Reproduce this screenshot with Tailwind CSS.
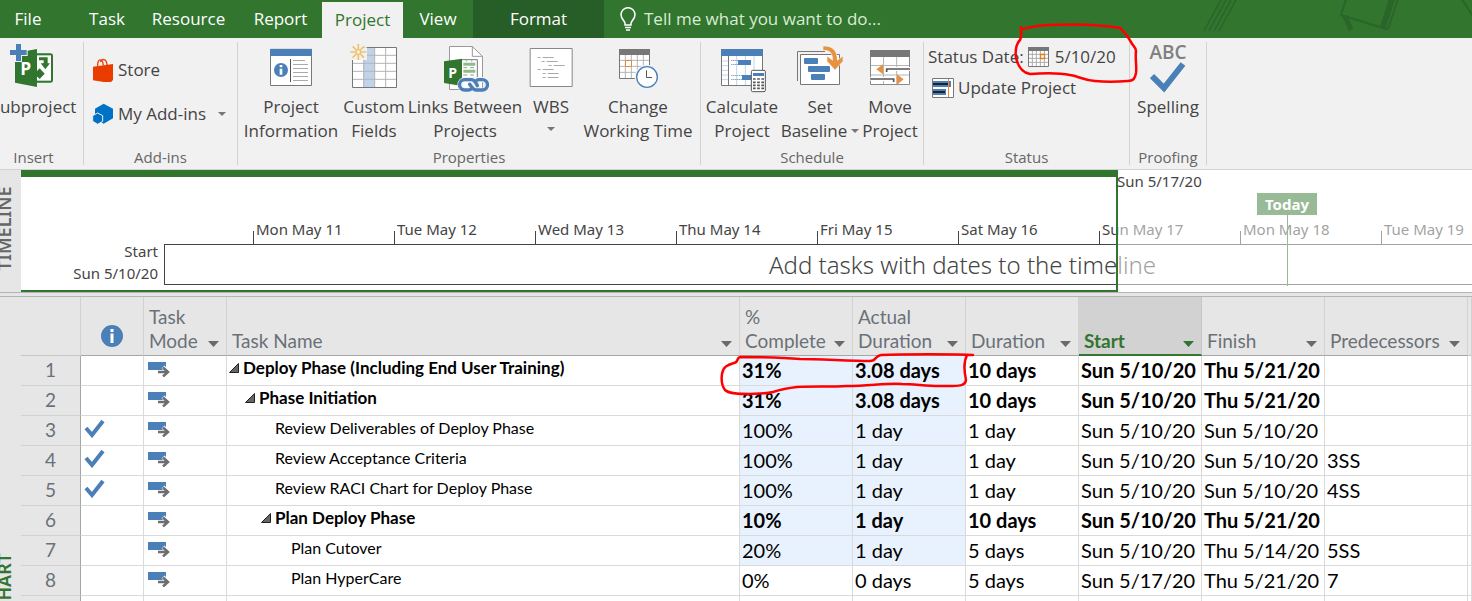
<!DOCTYPE html>
<html lang="en">
<head>
  <meta charset="UTF-8">
  <meta name="viewport" content="width=device-width, initial-scale=1.0">
  <title>Project</title>
  <script src="https://cdn.jsdelivr.net/npm/@tailwindcss/browser@4"></script>
</head>
<body class="relative flex flex-col h-screen overflow-hidden bg-[#e6e6e6] font-['Open_Sans','Noto_Sans',sans-serif] text-[#444444]">

  <!-- Tabs -->
  <nav class="relative flex shrink-0 h-[38px] bg-[#31752f] text-white text-[17px] leading-[38px] whitespace-nowrap">
    <svg class="absolute right-0 top-0 w-[292px] h-[38px]" viewBox="0 0 292 38" fill="none" stroke="#2a6529">
      <path d="M42-2L24 31M47-2L29 31M52-2L34 31M57-2L39 31" stroke-width="1.5"/>
      <path d="M166-1L161 15L206 29Q208 29 209 26L218-1" stroke-width="2"/>
      <path d="M212-1L203 27" stroke-width="6"/>
      <path d="M165 16L171 30" stroke-width="5"/>
      <path d="M281-2L293 16" stroke-width="2"/>
    </svg>
    <button class="w-14 mr-5">File</button>
    <button class="w-[62px]">Task</button>
    <button class="w-[101px]">Resource</button>
    <button class="w-[83px]">Report</button>
    <button class="w-[81px] mt-[2px] h-9 leading-9 bg-[#f1f1f1] text-[#31752f]">Project</button>
    <button class="w-[70px]">View</button>
    <button class="w-[131px] bg-[#275d26]">Format</button>
    <label class="relative flex items-center gap-2 pl-4">
      <svg class="w-4 h-6" viewBox="0 0 16 24" fill="none" stroke="#fff" stroke-width="1.5">
        <path d="M5 18V16.5C5 14 1 12 1 7.700A7 7 0 0 1 15 7.700C15 12 11 14 11 16.500V18Z"/>
        <path d="M5 20.500H11M6 23H10"/>
      </svg>
      <input type="text" aria-label="Tell me what you want to do" placeholder="Tell me what you want to do..." class="w-[280px] bg-transparent outline-none placeholder:text-[#d9ecd4]">
    </label>
  </nav>

  <!-- Ribbon -->
  <div class="flex shrink-0 h-[132px] pt-1 bg-[#f1f1f1] border-b border-[#d2d2d2] text-[17px] leading-6 whitespace-nowrap">

    <section class="flex flex-col items-center w-[84px] h-[123px] pr-4 border-r border-[#d2d2d2]">
      <button class="flex flex-col items-center">
        <svg class="w-[52px] h-[53px]" viewBox="21 126 156 159">
          <path d="M108 160H148Q156 160 156 168V240Q156 248 148 248H108Z" fill="#31752f"/>
          <path d="M108 166H150V242H108Z" fill="#fff"/>
          <path d="M114 172H140V190H147L133 208L119 190H128V181H114Z" fill="#31752f"/>
          <path d="M108 213L116 205L131 221L116 237L108 229Z" fill="#31752f"/>
          <path d="M42 159L108 147V261L42 248Z" fill="#31752f"/>
          <path d="M42 147H62V148H80V168H63V186H42Z" fill="#f1f1f1"/>
          <path d="M45 132H60V150H77V165H60V183H45V165H27V150H45Z" fill="#4a7fb8"/>
          <text x="58" y="225" font-size="52" font-weight="700" fill="#fff">P</text>
        </svg>
        Subproject
      </button>
      <span class="mt-auto text-[15px] leading-4 text-[#666666]">Insert</span>
    </section>

    <section class="flex flex-col w-[154px] h-[123px] pl-2 border-r border-[#d2d2d2]">
      <button class="flex items-center gap-1 mt-4">
        <svg class="w-[22px] h-6" viewBox="276 168 66 72">
          <path d="M279 194L339 186V234L330 243L279 235Z" fill="#eb3c00"/>
          <path d="M293 193C292 168 308 168 310 190M301 180C306 168 320 170 321 189" fill="none" stroke="#eb3c00" stroke-width="4"/>
        </svg>
        Store
      </button>
      <button class="flex items-center gap-1 mt-5">
        <svg class="w-[22px] h-6" viewBox="276 304 66 72">
          <path d="M311 309L339 324V353L311 369L285 353V324Z" fill="#0072c6"/>
          <path d="M293 337L308 345V362L293 371L278 362V345Z" fill="#0072c6" stroke="#f1f1f1" stroke-width="3"/>
        </svg>
        My Add-ins
        <svg class="w-2 h-1 ml-2" viewBox="0 0 8 4"><path d="M0 0H8L4 4Z" fill="#777"/></svg>
      </button>
      <span class="mt-auto pr-2 text-center text-[15px] leading-4 text-[#666666]">Add-ins</span>
    </section>

    <section class="flex flex-col w-[463px] h-[123px] border-r border-[#d2d2d2]">
      <div class="flex items-start pl-1">
        <button class="flex flex-col items-center w-[98px]">
          <svg class="w-[48px] h-[53px]" viewBox="801 126 144 159">
            <path d="M811.500 148H934.500V256.500H811.500Z" fill="#fff" stroke="#777" stroke-width="3"/>
            <path d="M810 147H936V168H810Z" fill="#4a7fb8"/>
            <circle cx="843" cy="210" r="21" fill="#4a7fb8"/>
            <path d="M839 206H847V224H839ZM839 195H847V202H839Z" fill="#fff"/>
            <path d="M871.500 177V246" stroke="#555" stroke-width="3"/>
            <path d="M879 181.500H915M879 193.500H924M879 205.500H924M879 217.500H924M879 229.500H924M879 241.500H924" stroke="#aaa" stroke-width="3"/>
          </svg>
          Project<br>Information
        </button>
        <button class="flex flex-col items-center w-[68px]">
          <svg class="w-[48px] h-[53px]" viewBox="1050 126 144 159">
            <path d="M1057.500 142.500H1189.500V262.500H1057.500Z" fill="#fff"/>
            <path d="M1091 142H1124V262H1091Z" fill="#c0d3e9"/>
            <path d="M1058 166H1190M1058 190H1190M1058 214H1190M1058 238H1190M1091 142V262M1124 142V262M1157 142V262" stroke="#b5b5b5" stroke-width="3"/>
            <path d="M1057.500 142.500H1189.500V262.500H1057.500Z" fill="none" stroke="#777" stroke-width="3"/>
            <path d="M1048 130H1091V142H1101V180H1048Z" fill="#f1f1f1"/>
            <path d="M1075 132V148M1075 164V180M1051 156H1067M1083 156H1099M1058 139L1069 150M1081 162L1092 173M1058 173L1069 162M1081 150L1092 139" stroke="#f0c16c" stroke-width="5"/>
            <circle cx="1075" cy="156" r="7" fill="none" stroke="#f0c16c" stroke-width="4"/>
          </svg>
          Custom<br>Fields
        </button>
        <button class="flex flex-col items-center w-[114px]">
          <svg class="w-[48px] h-[53px]" viewBox="123 126 144 159">
            <path d="M148.500 139.500H217L247.500 169V268.500H148.500Z" fill="#fff" stroke="#999" stroke-width="3"/>
            <path d="M217 139V169H247" fill="none" stroke="#999" stroke-width="3"/>
            <path d="M186 179H232V236" fill="none" stroke="#777" stroke-width="3"/>
            <path d="M190 193H226M190 214H226" stroke="#8cbd87" stroke-width="9"/>
            <path d="M190 203H202M210 203H222M190 225H202M210 225H222M197 183H201M213 183H217" stroke="#999" stroke-width="3"/>
            <path d="M132 184L186 176V258L132 249Z" fill="#31752f"/>
            <text x="145" y="234" font-size="42" font-weight="700" fill="#fff">P</text>
            <g fill="none" stroke="#f1f1f1" stroke-width="16"><rect x="180" y="239" width="54" height="32" rx="16"/><rect x="212" y="239" width="50" height="32" rx="16"/></g>
            <g fill="none" stroke="#4a7fb8" stroke-width="10" stroke-linecap="round">
              <path d="M214 266Q211 270 205 270H194A15 15 0 0 1 194 239H214Q221 239 227 248L232 257"/>
              <path d="M228 243Q231 239 237 239H247A15 15 0 0 1 247 270H229Q221 270 215 261L209 253"/>
            </g>
          </svg>
          Links Between<br>Projects
        </button>
        <button class="flex flex-col items-center w-[58px]">
          <svg class="w-[48px] h-[53px]" viewBox="382 126 144 159">
            <path d="M391.500 145.500H517.500V259.500H391.500Z" fill="#fff" stroke="#888" stroke-width="3"/>
            <path d="M414 172.500H423M429 172.500H462M426 184.500H435M441 184.500H474M447 196.500H456M462 196.500H495M414 208.500H423M429 208.500H462M429 220.500H438M444 220.500H477M429 232.500H438M444 232.500H477" stroke="#aaa" stroke-width="3"/>
          </svg>
          WBS
          <svg class="w-2 h-1 mt-2" viewBox="0 0 8 4"><path d="M0 0H8L4 4Z" fill="#777"/></svg>
        </button>
        <button class="flex flex-col items-center w-[116px]">
          <svg class="w-[48px] h-[53px]" viewBox="642 126 144 159">
            <path d="M658.500 160H748.500V235.500H658.500Z" fill="#fff"/>
            <path d="M676 163V235M694 163V235M712 163V235M730 163V235M658 181H748M658 199H748M658 217H748" stroke="#b5b5b5" stroke-width="3"/>
            <path d="M658.500 160H748.500V235.500H658.500Z" fill="none" stroke="#777" stroke-width="3"/>
            <path d="M657 147H750V165H657Z" fill="#777"/>
            <path d="M676.500 181.500H694.500V199.500H676.500Z" fill="#fff" stroke="#e3873b" stroke-width="3"/>
            <circle cx="741" cy="231" r="37" fill="#f1f1f1"/>
            <circle cx="741" cy="231" r="31" fill="#fff" stroke="#4a7fb8" stroke-width="4"/>
            <path d="M739.500 211V232.500H756" fill="none" stroke="#555" stroke-width="3"/>
          </svg>
          Change<br>Working Time
        </button>
      </div>
      <span class="mt-auto text-center text-[15px] leading-4 text-[#666666]">Properties</span>
    </section>

    <section class="flex flex-col w-[223px] h-[123px] border-r border-[#d2d2d2]">
      <div class="flex items-start pl-1">
        <button class="flex flex-col items-center w-[74px]">
          <svg class="w-[48px] h-[53px]" viewBox="54 126 144 159">
            <path d="M64.500 150H187.500V256.500H64.500Z" fill="#fff" stroke="#777" stroke-width="3"/>
            <path d="M66 183H84M66 197H84M66 211H84M66 225H84M66 239H84M110 168V255M136 168V255M162 168V255" stroke="#c0d3e9" stroke-width="3"/>
            <path d="M85.500 168V256" stroke="#777" stroke-width="3"/>
            <path d="M63 147H189V168H63Z" fill="#4a7fb8"/>
            <path d="M94 181.500H114M94 193.500H114M94 226.500H126M94 238.500H126" stroke="#4a7fb8" stroke-width="3" stroke-dasharray="3 3"/>
            <path d="M114 180H153V195H114ZM126 225H153V240H126Z" fill="#4a7fb8"/>
            <rect x="154" y="211" width="42" height="64" rx="4" fill="#fff" stroke="#555" stroke-width="3"/>
            <path d="M159 219H192V228H159Z" fill="#4a7fb8"/>
            <path d="M159 237H192M159 247H192M159 256H192M159 265H192" stroke="#555" stroke-width="5" stroke-dasharray="8 4.500"/>
          </svg>
          Calculate<br>Project
        </button>
        <button class="flex flex-col items-center w-[82px]">
          <svg class="w-[48px] h-[53px]" viewBox="288 126 144 159">
            <path d="M292.500 243V154.500H375" fill="none" stroke="#777" stroke-width="3"/>
            <path d="M301.500 163.500H418.500V253.500H301.500Z" fill="#fff" stroke="#777" stroke-width="3"/>
            <rect x="312" y="174" width="42" height="18" rx="3" fill="#4a7fb8"/>
            <rect x="324" y="198" width="66" height="18" rx="3" fill="#4a7fb8"/>
            <rect x="333" y="222" width="42" height="18" rx="3" fill="#4a7fb8"/>
            <path d="M369 138C398 137 412 151 412 181L429 168V184L405 210L381 184V168L398 181C398 160 390 150 369 151Z" fill="#e8913f" stroke="#f1f1f1" stroke-width="2"/>
          </svg>
          Set
          <span class="flex items-center gap-1">Baseline <svg class="w-2 h-1" viewBox="0 0 8 4"><path d="M0 0H8L4 4Z" fill="#777"/></svg></span>
        </button>
        <button class="flex flex-col items-center w-[58px]">
          <svg class="w-[48px] h-[53px]" viewBox="495 126 144 159">
            <path d="M508.500 160H625.500V253.500H508.500Z" fill="#fff"/>
            <path d="M547.500 170V253M587 170V253M508 196.500H626M508 225H626" stroke="#b5b5b5" stroke-width="3"/>
            <path d="M508.500 160H625.500V253.500H508.500Z" fill="none" stroke="#888" stroke-width="3"/>
            <path d="M507 150H627V171H507Z" fill="#777"/>
            <path d="M627 207H557V216M508 237H578V246" fill="none" stroke="#fff" stroke-width="12"/>
            <path d="M627 207H557V216M508 237H578V246" fill="none" stroke="#555" stroke-width="5"/>
            <path d="M526 208L546 193V223ZM608 238L588 223V254Z" fill="#e8913f"/>
          </svg>
          Move<br>Project
        </button>
      </div>
      <span class="mt-auto text-center text-[15px] leading-4 text-[#666666]">Schedule</span>
    </section>

    <section class="flex flex-col w-[206px] h-[123px] pl-1 border-r border-[#d2d2d2]">
      <div class="flex items-center gap-1 h-[30px]">
        <span id="status-date">Status Date:</span>
        <button aria-labelledby="status-date status-date-value" class="flex items-center gap-1">
          <svg class="w-[23px] h-[22px]" viewBox="984 135 69 66">
            <path d="M985.500 140H1045.500V196.500H985.500Z" fill="#fff"/>
            <path d="M997 150V196M1009 150V196M1021 150V196M1033 150V196M985 160H1045M985 172H1045M985 184H1045" stroke="#aaa" stroke-width="3"/>
            <path d="M985.500 140H1045.500V196.500H985.500Z" fill="none" stroke="#777" stroke-width="3"/>
            <path d="M984 138H1047V150H984Z" fill="#777"/>
            <path d="M1021.500 160.500H1033.500V172.500H1021.500Z" fill="#fff" stroke="#e3801f" stroke-width="4"/>
          </svg>
          <span id="status-date-value">5/10/20</span>
        </button>
      </div>
      <button class="flex items-center gap-1 h-8">
        <svg class="w-[26px] h-[22px]" viewBox="684 228 78 66">
          <path d="M697.500 232.500H760.500V289.500H697.500Z" fill="#fff" stroke="#777" stroke-width="3"/>
          <path d="M699 240H753V258H699ZM699 264H738V282H699Z" fill="#4a7fb8"/>
          <path d="M699 249H744M699 273H735" stroke="#222" stroke-width="6"/>
          <path d="M745.500 234V288" stroke="#e3873b" stroke-width="3"/>
        </svg>
        Update Project
      </button>
      <span class="mt-auto pr-1 text-center text-[15px] leading-4 text-[#666666]">Status</span>
    </section>

    <section class="flex flex-col items-center w-[77px] h-[123px] border-r border-[#d2d2d2]">
      <button class="flex flex-col items-center">
        <span class="h-[19px] leading-5 text-[19px] font-semibold text-[#808080]">ABC</span>
        <svg class="w-[36px] h-[34px]" viewBox="0 0 36 34"><path d="M2 15L14 27L33 3" fill="none" stroke="#4a7fb8" stroke-width="6"/></svg>
        Spelling
      </button>
      <span class="mt-auto text-[15px] leading-4 text-[#666666]">Proofing</span>
    </section>
  </div>

  <!-- Timeline -->
  <div class="flex shrink-0 h-[123px] border-b border-[#b4b4b4] font-['Noto_Sans','Open_Sans',sans-serif]">
    <div class="w-[21px] shrink-0 overflow-hidden pt-[17px]">
      <div class="-ml-2 h-[90px] w-6 rotate-180 text-right [writing-mode:vertical-rl] leading-6 text-[18px] font-semibold text-[#666666]">TIMELINE</div>
    </div>
    <div class="relative flex-1 overflow-hidden bg-white text-[15px] leading-5 whitespace-nowrap">
      <div class="absolute left-[143px] -right-1 top-[74px] h-[41px] border border-[#444444]"></div>
      <div class="absolute right-[calc(100%-137px)] top-[70px] leading-[22px] text-right">Start<br>Sun 5/10/20</div>
      <div id="ticks"></div>
      <div class="absolute left-[748px] top-[79px] leading-8 text-[24px] font-light">Add tasks with dates to the timeline</div>
      <div class="absolute left-[1266px] top-6 h-[92px] w-px bg-[#31752f]"></div>
      <div class="absolute left-[1236px] top-[23px] w-[60px] h-[22px] text-center leading-[22px] font-bold bg-[#31752f] text-white">Today</div>
      <!-- range outside the visible window is faded -->
      <div class="absolute left-[1097px] right-0 inset-y-0 bg-white/50"></div>
      <div class="absolute left-0 top-0 w-[1097px] h-[122px] border-t-[7px] border-b-2 border-r-2 border-[#31752f]"></div>
      <div class="absolute left-[1096px] top-px">Sun 5/17/20</div>
    </div>
  </div>

  <!-- Gantt table -->
  <div class="flex flex-1 min-h-0 mt-[3px] border-t border-[#b4b4b4]">
    <div class="w-[21px] shrink-0 overflow-hidden pt-[256px] font-['Noto_Sans','Open_Sans',sans-serif]">
      <div class="-ml-2 h-[130px] w-6 rotate-180 text-right [writing-mode:vertical-rl] leading-6 text-[18px] font-semibold text-[#31752f]">CHART</div>
    </div>
    <div class="flex-1 overflow-hidden font-['Lato','Open_Sans',sans-serif]">
      <table class="w-full table-fixed border-separate border-spacing-0 text-[20px] leading-6 text-black whitespace-nowrap">
        <colgroup>
          <col class="w-[60px]"><col class="w-[63px]"><col class="w-[83px]"><col>
          <col class="w-[113px]"><col class="w-[113px]"><col class="w-[113px]">
          <col class="w-[123px]"><col class="w-[123px]"><col class="w-[143px]"><col class="w-[4px]">
        </colgroup>
        <thead id="head" class="text-[19px] text-[#6a7178]"></thead>
        <tbody id="body"></tbody>
      </table>
    </div>
  </div>

  <!-- Red pen marks -->
  <svg class="absolute left-0 top-0 w-[1472px] h-[601px] pointer-events-none" viewBox="0 0 1472 601" fill="none" stroke="#ff0000" stroke-width="2.500" stroke-linecap="round" stroke-linejoin="round">
    <path d="M1021 27V30C1026 27 1036 26 1047 25C1070 24 1100 24 1120 28C1125 32 1128 37 1131 42C1132 45 1136 47 1136 51C1135 60 1137 66 1136 73C1135 79 1133 81 1128 81C1115 82 1105 82 1095 81C1083 80 1078 76 1070 75C1060 73 1045 73 1030 74C1022 73 1018 66 1016 58C1015 50 1016 44 1020 40C1022 37 1021 34 1021 30"/>
    <path d="M973 355C960 354 900 354 881 355C874 356 877 361 870 361C850 361 820 359 800 359C780 357 755 357 740 357C736 358 739 362 734 363C727 365 723 367 722 374C721 381 722 386 725 390C729 394 740 394 750 394C760 393 766 394 773 392C782 389 788 388 797 387C810 386 830 387 847 386C870 386 885 383 902 384C915 384 925 386 940 386C957 386 965 387 966 380C964 371 963 363 967 355"/>
  </svg>

  <script>
    // timeline day marks
    const days = ['Mon May 11', 'Tue May 12', 'Wed May 13', 'Thu May 14', 'Fri May 15', 'Sat May 16', 'Sun May 17', 'Mon May 18', 'Tue May 19'];
    document.getElementById('ticks').innerHTML = days.map((d, i) => `
      <div class="absolute top-[49px] h-[26px] pl-[3px]" style="left:${232 + i * 141}px">
        <span class="absolute left-0 bottom-0 h-[14px] w-px bg-[#444444]"></span>${d}
      </div>`).join('');

    const arrow = (cls) => `<svg class="w-[11px] h-[6px] mb-[6px] shrink-0 ${cls}" viewBox="0 0 11 6"><path d="M0 0H11L5.500 6Z" fill="currentColor"/></svg>`;
    const cols = ['', 'i', 'Task<br>Mode', 'Task Name', '%<br>Complete', 'Actual<br>Duration', 'Duration', 'Start', 'Finish', 'Predecessors', ''];
    document.getElementById('head').innerHTML = '<tr>' + cols.map((c) => {
      if (c === 'i') return `<th class="h-[59px] p-0 pt-5 border-b border-r border-b-[#a6a6a6] border-r-[#d2d2d2]">
        <svg class="mx-auto w-[22px] h-[22px]" viewBox="0 0 22 22"><circle cx="11" cy="11" r="11" fill="#4a7fb8"/><path d="M9.500 8.500H12.500V18H9.500ZM9.500 4H12.500V7H9.500Z" fill="#fff"/></svg></th>`;
      if (!c) return '<th class="h-[59px] p-0 border-b border-r border-b-[#c6c6c6] border-r-[#d2d2d2]"></th>';
      if (c === 'Start') return `<th class="h-[59px] p-0 pl-[5px] pr-[7px] pb-px align-bottom text-left font-bold text-[#31752f] bg-[#d2d2d2] border-b-2 border-r border-b-[#31752f] border-r-[#c6c6c6]">
        <div class="flex items-end justify-between">${c}${arrow('')}</div></th>`;
      return `<th class="h-[59px] p-0 pl-[5px] pr-[7px] pb-[2px] align-bottom text-left font-normal border-b border-r border-b-[#a6a6a6] border-r-[#d2d2d2]">
        <div class="flex items-end justify-between"><span>${c}</span>${arrow('text-[#666b70]')}</div></th>`;
    }).join('') + '</tr>';

    // [name, depth, summary, done, % complete, actual, duration, start, finish, predecessors]
    const tasks = [
      ['Deploy Phase (Including End User Training)', 0, 1, 0, '31%', '3.08 days', '10 days', 'Sun 5/10/20', 'Thu 5/21/20', ''],
      ['Phase Initiation', 1, 1, 0, '31%', '3.08 days', '10 days', 'Sun 5/10/20', 'Thu 5/21/20', ''],
      ['Review Deliverables of Deploy Phase', 2, 0, 1, '100%', '1 day', '1 day', 'Sun 5/10/20', 'Sun 5/10/20', ''],
      ['Review Acceptance Criteria', 2, 0, 1, '100%', '1 day', '1 day', 'Sun 5/10/20', 'Sun 5/10/20', '3SS'],
      ['Review RACI Chart for Deploy Phase', 2, 0, 1, '100%', '1 day', '1 day', 'Sun 5/10/20', 'Sun 5/10/20', '4SS'],
      ['Plan Deploy Phase', 2, 1, 0, '10%', '1 day', '10 days', 'Sun 5/10/20', 'Thu 5/21/20', ''],
      ['Plan Cutover', 3, 0, 0, '20%', '1 day', '5 days', 'Sun 5/10/20', 'Thu 5/14/20', '5SS'],
      ['Plan HyperCare', 3, 0, 0, '0%', '0 days', '5 days', 'Sun 5/17/20', 'Thu 5/21/20', '7'],
    ];
    const check = '<svg class="w-[21px] h-[19px]" viewBox="0 0 21 19"><path d="M2 9L8 16L19 2" fill="none" stroke="#4a7fb8" stroke-width="4"/></svg>';
    const mode = '<svg class="w-[22px] h-[15px]" viewBox="0 0 22 15"><path d="M0 0H18V8H0Z" fill="#4a7fb8"/><path d="M9 10H20M15 5L20 10L15 15" fill="none" stroke="#fff" stroke-width="4"/><path d="M10 10H20M15 5.500L20 10L15 14.500" fill="none" stroke="#6e6e6e" stroke-width="2.500"/></svg>';
    const open = '<svg class="w-[10px] h-[10px] mr-1" viewBox="0 0 10 10"><path d="M0.500 9.500L9.500 0.500V9.500Z" fill="#666" stroke="#222"/></svg>';
    const td = 'h-[30px] p-0 border-b border-r border-[#dadada]';
    document.getElementById('body').innerHTML = tasks.map((t, i) => `
      <tr class="${t[2] ? 'font-bold' : ''}">
        <td class="h-[30px] p-0 pb-[2px] text-center font-normal text-[19px] text-[#6a7178] bg-[#e6e6e6] border-b border-r border-b-[#d2d2d2] border-r-[#a6a6a6]">${i + 1}</td>
        <td class="${td} bg-white pl-[3px] pb-1">${t[3] ? check : ''}</td>
        <td class="${td} bg-white pl-1 pb-[3px]">${mode}</td>
        <td class="${td} bg-white pb-[5px]"><div class="flex items-center ${t[2] ? 'text-[17px]' : 'text-[16px]'}" style="padding-left:${t[1] * 16 + (t[2] ? 2 : 16)}px">${t[2] ? open : ''}${t[0]}</div></td>
        ${t.slice(4).map((v, c) => `<td class="${td} pl-[2px] pb-[2px] ${c < 2 && i < 7 ? 'bg-[#e8f2fe]' : 'bg-white'}">${v}</td>`).join('')}
        <td class="${td} bg-white"></td>
      </tr>`).join('') + `<tr><td class="h-[30px] border-r border-[#a6a6a6]"></td>${`<td class="${td} bg-white"></td>`.repeat(10)}</tr>`;
  </script>
</body>
</html>
